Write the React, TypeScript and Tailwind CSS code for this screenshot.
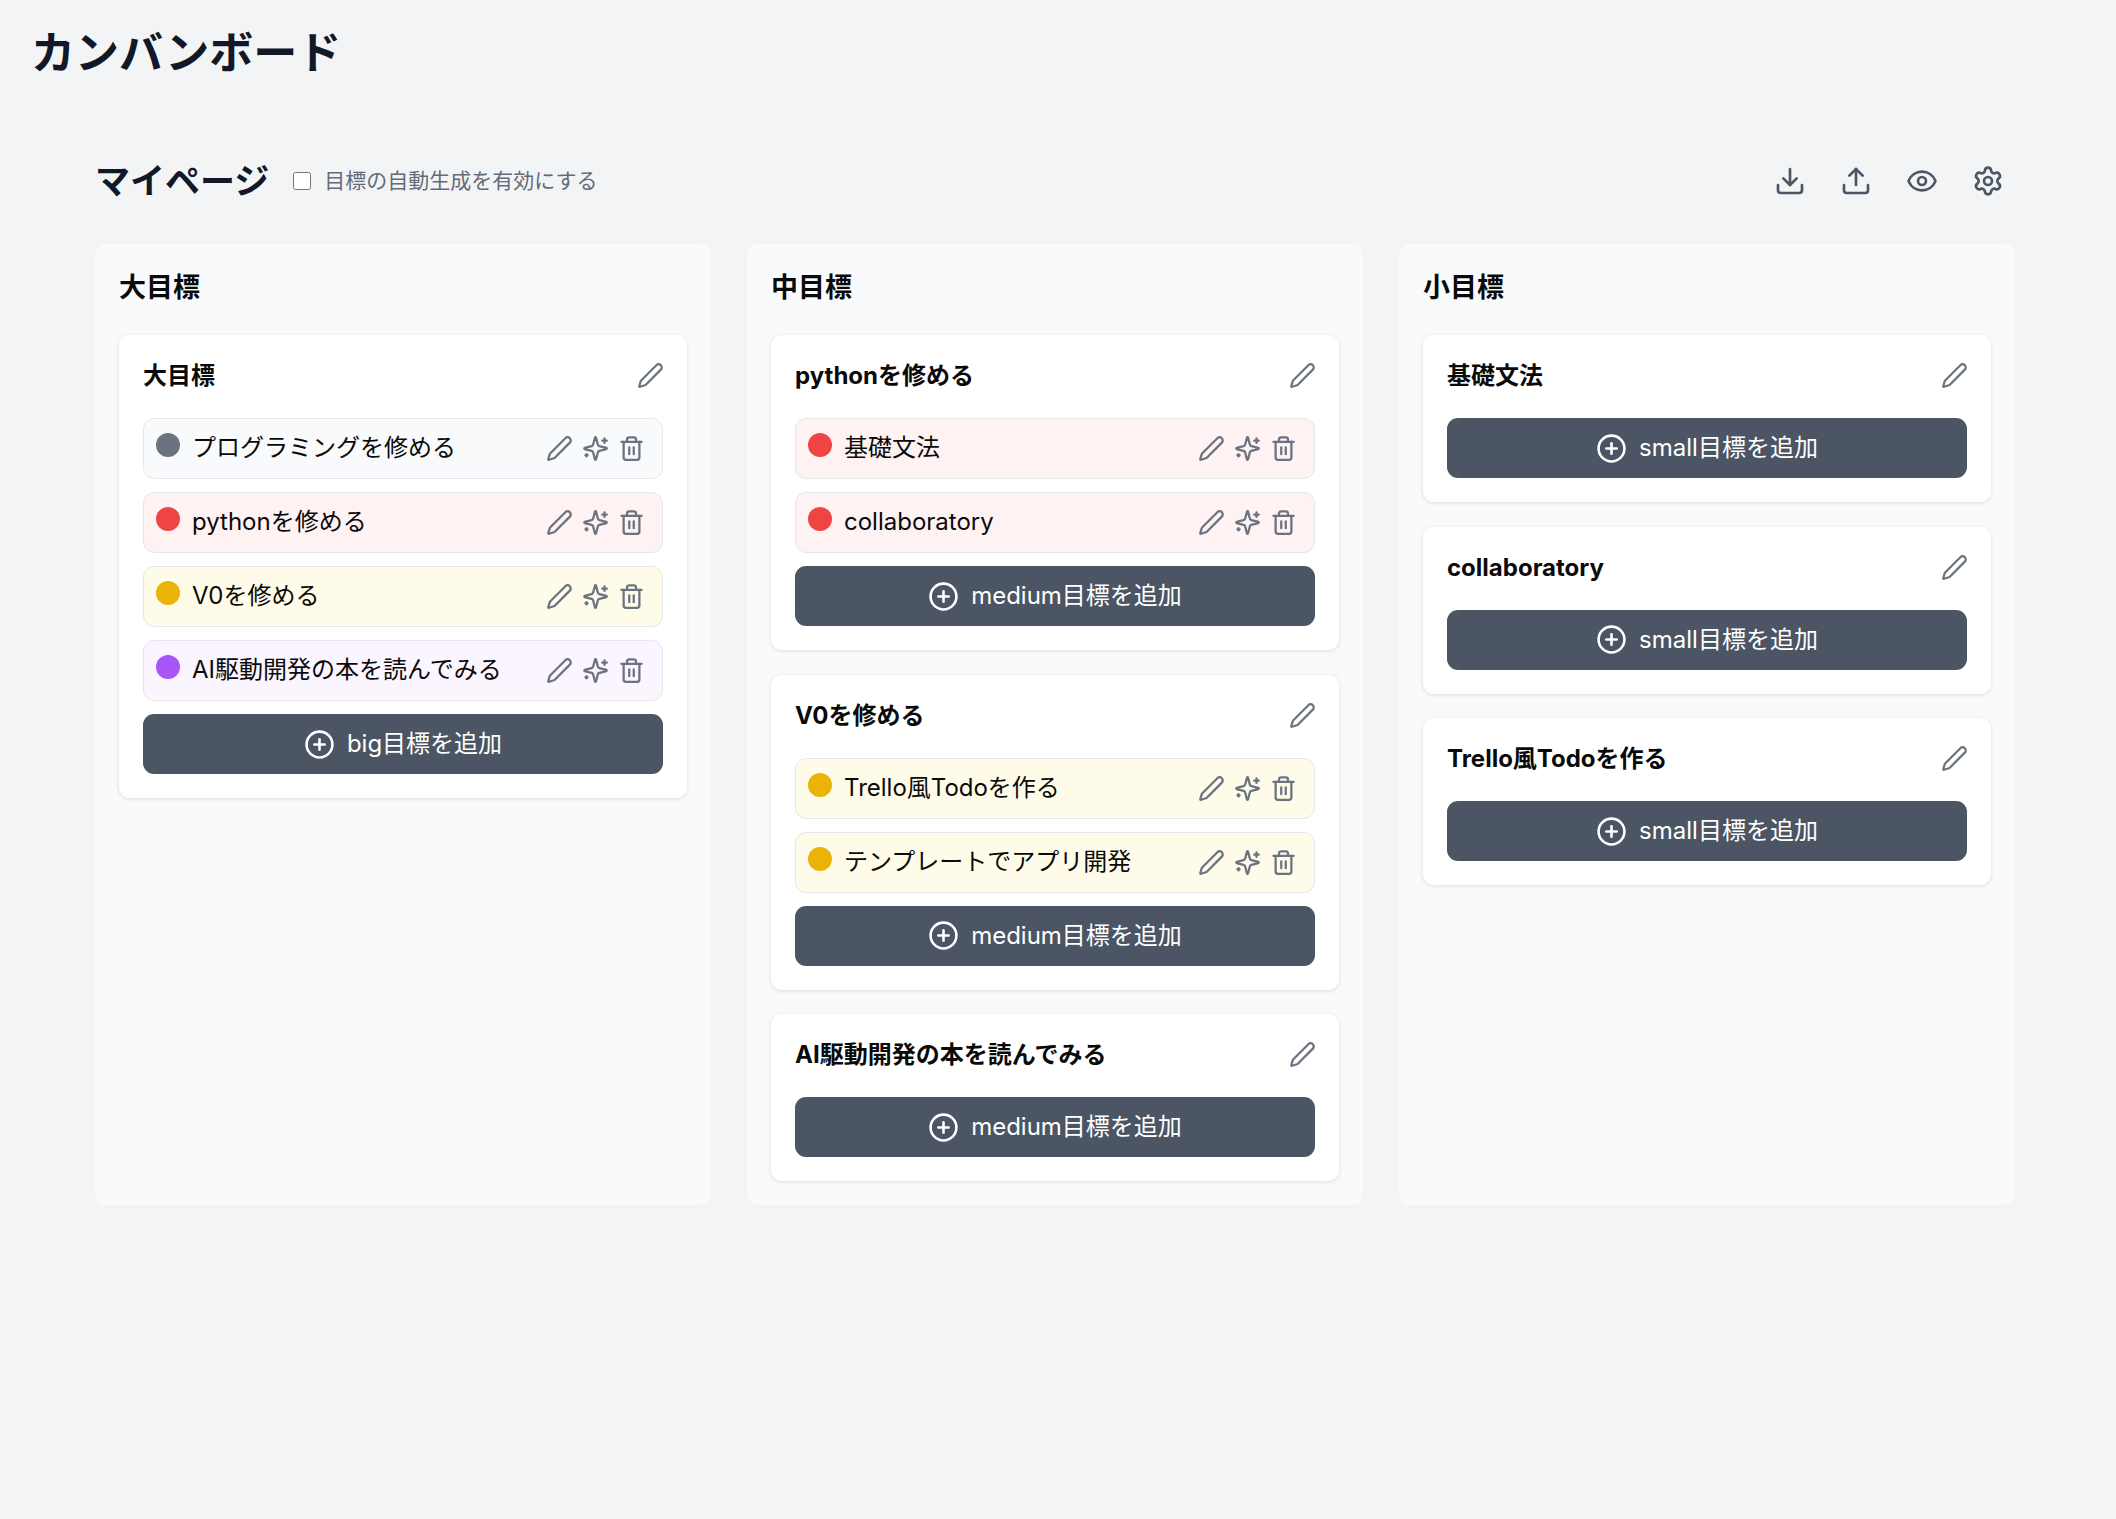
import React from 'react';
import { Download, Upload, Eye, Settings, Pen, Trash2, CirclePlus } from 'lucide-react';

type Tone = 'gray' | 'red' | 'yellow' | 'purple';

const TONES: Record<Tone, { row: string; dot: string }> = {
  gray: { row: 'bg-gray-50', dot: 'bg-[#6b7280]' },
  red: { row: 'bg-[#fef2f2]', dot: 'bg-[#ef4444]' },
  yellow: { row: 'bg-[#fefce8]', dot: 'bg-[#eab308]' },
  purple: { row: 'bg-[#faf5ff]', dot: 'bg-[#a855f7]' }
};

type Item = { label: string; tone: Tone };
type CardData = { title: string; items: Item[]; addLabel: string };

const COLUMNS: { title: string; cards: CardData[] }[] = [
  {
    title: '大目標',
    cards: [
      {
        title: '大目標',
        addLabel: 'big目標を追加',
        items: [
          { label: 'プログラミングを修める', tone: 'gray' },
          { label: 'pythonを修める', tone: 'red' },
          { label: 'V0を修める', tone: 'yellow' },
          { label: 'AI駆動開発の本を読んでみる', tone: 'purple' }
        ]
      }
    ]
  },
  {
    title: '中目標',
    cards: [
      {
        title: 'pythonを修める',
        addLabel: 'medium目標を追加',
        items: [
          { label: '基礎文法', tone: 'red' },
          { label: 'collaboratory', tone: 'red' }
        ]
      },
      {
        title: 'V0を修める',
        addLabel: 'medium目標を追加',
        items: [
          { label: 'Trello風Todoを作る', tone: 'yellow' },
          { label: 'テンプレートでアプリ開発', tone: 'yellow' }
        ]
      },
      { title: 'AI駆動開発の本を読んでみる', addLabel: 'medium目標を追加', items: [] }
    ]
  },
  {
    title: '小目標',
    cards: [
      { title: '基礎文法', addLabel: 'small目標を追加', items: [] },
      { title: 'collaboratory', addLabel: 'small目標を追加', items: [] },
      { title: 'Trello風Todoを作る', addLabel: 'small目標を追加', items: [] }
    ]
  }
];

// the installed Sparkles has a round dot, the picture has a tiny plus
const SparkIcon: React.FC = () => (
  <svg width={27} height={27} viewBox="0 0 24 24" fill="none" stroke="currentColor" strokeWidth={2} strokeLinecap="round" strokeLinejoin="round">
    <path d="M9.937 15.5A2 2 0 0 0 8.5 14.063l-6.135-1.582a.5.5 0 0 1 0-.962L8.5 9.936A2 2 0 0 0 9.937 8.5l1.582-6.135a.5.5 0 0 1 .963 0L14.063 8.5A2 2 0 0 0 15.5 9.937l6.135 1.581a.5.5 0 0 1 0 .964L15.5 14.063a2 2 0 0 0-1.437 1.437l-1.582 6.135a.5.5 0 0 1-.963 0z" />
    <path d="M20 3v4" />
    <path d="M22 5h-4" />
    <path d="M4 17v2" />
    <path d="M5 18H3" />
  </svg>
);

const GoalRow: React.FC<{ item: Item }> = ({ item }) => {
  const tone = TONES[item.tone];
  return (
    <div className={`h-[61px] rounded-[11px] border border-gray-200 flex items-center pl-[12px] pr-[17px] ${tone.row}`}>
      <span className={`w-[24px] h-[24px] rounded-full shrink-0 -mt-[7px] ${tone.dot}`} />
      <span className="ml-[12px] flex-1 text-[24px] leading-[36px] text-[#0a0a0a] -mt-[1px]">{item.label}</span>
      <div className="flex items-center gap-[9px] text-[#6b7280]">
        <Pen size={27} strokeWidth={2} />
        <SparkIcon />
        <Trash2 size={27} strokeWidth={2} />
      </div>
    </div>
  );
};

const GoalCard: React.FC<{ card: CardData }> = ({ card }) => (
  <div className="bg-white rounded-[11px] shadow-[0_1px_4px_rgba(0,0,0,0.12)] p-[24px]">
    <div className="flex items-center justify-between h-[32px] mb-[27px]">
      <h3 className="text-[24px] font-bold text-[#0a0a0a] mt-[2px]">{card.title}</h3>
      <Pen size={27} className="text-[#6b7280] mr-[-1px] mt-[1px]" />
    </div>
    <div className="flex flex-col gap-[13px]">
      {card.items.map(item => (
        <GoalRow key={item.label} item={item} />
      ))}
      <button className="h-[60px] rounded-[11px] bg-[#4b5563] text-white text-[24px] flex items-center justify-center gap-[12px]">
        <CirclePlus size={31} strokeWidth={2} />
        {card.addLabel}
      </button>
    </div>
  </div>
);

const App: React.FC = () => {
  return (
    <div className="min-h-[1519px] bg-[#f3f4f6] font-['Inter','Noto_Sans_CJK_JP',sans-serif]">
      <div className="px-[31px] pt-[21px]">
        <h1 className="text-[44px] leading-[64px] font-bold text-[#111827]">カンバンボード</h1>
      </div>

      <div className="px-[95px] pt-[69px]">
        <div className="flex items-center justify-between h-[54px] mb-[36px] w-[1920px]">
          <div className="flex items-center">
            <h2 className="text-[35px] font-bold text-[#111827]">マイページ</h2>
            <label className="flex items-center ml-[24px]">
              <input type="checkbox" className="w-[18px] h-[18px]" />
              <span className="ml-[13px] text-[21px] text-[#636b79]">目標の自動生成を有効にする</span>
            </label>
          </div>
          <div className="flex items-center gap-[12px] text-[#4b5563]">
            <button className="p-[11px]"><Download size={32} /></button>
            <button className="p-[11px]"><Upload size={32} /></button>
            <button className="p-[11px]"><Eye size={32} /></button>
            <button className="p-[11px]"><Settings size={32} /></button>
          </div>
        </div>

        <div className="grid grid-cols-3 gap-[36px] w-[1920px]">
          {COLUMNS.map(col => (
            <div key={col.title} className="bg-[#f9fafb] rounded-[11px] p-[24px] h-[961px]">
              <h2 className="text-[27px] leading-[40px] font-bold text-[#0a0a0a] mb-[27px] pt-[1px] -mt-[1px]">{col.title}</h2>
              <div className="flex flex-col gap-[24.5px]">
                {col.cards.map(card => (
                  <GoalCard key={card.title} card={card} />
                ))}
              </div>
            </div>
          ))}
        </div>
      </div>
    </div>
  );
};

export default App;
